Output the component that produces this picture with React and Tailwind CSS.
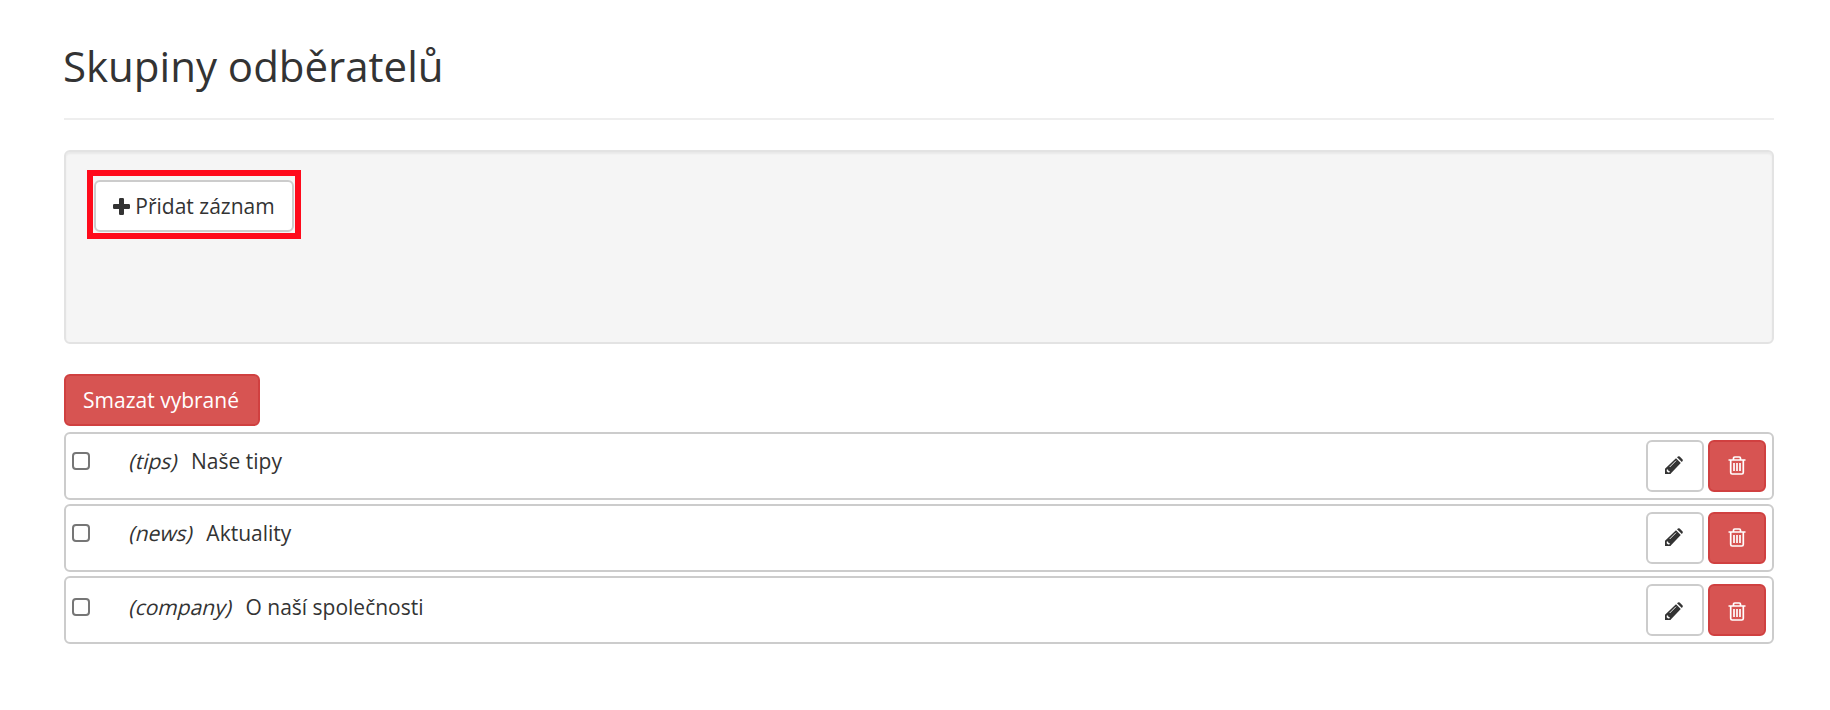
const groups = [
    { code: "tips", name: "Naše tipy" },
    { code: "news", name: "Aktuality" },
    { code: "company", name: "O naší společnosti" },
];

function PlusIcon() {
    return (
        <svg width="17" height="17" viewBox="0 0 17 17" fill="currentColor" className="-mt-0.5">
            <path d="M7.200 0h2.600a1.200 1.200 0 0 1 1.200 1.200V6h4.800A1.200 1.200 0 0 1 17 7.200v2.600a1.200 1.200 0 0 1-1.200 1.200H11v4.800A1.200 1.200 0 0 1 9.800 17H7.200A1.200 1.200 0 0 1 6 15.800V11H1.200A1.200 1.200 0 0 1 0 9.800V7.200A1.200 1.200 0 0 1 1.200 6H6V1.200A1.200 1.200 0 0 1 7.200 0z" />
        </svg>
    );
}

function PencilIcon() {
    return (
        <svg width="18" height="18" viewBox="0 0 18 18" className="-ml-0.5">
            <path fill="#333" d="M12 1.200l1-.8q.8-.6 1.700.2l2.700 2.700q.8.800.2 1.700l-.8 1zM11 2.200l4.800 4.800L6 17.200 5.500 18H0v-5.200z" />
            <path stroke="#fff" strokeWidth=".9" d="M4.700 11l6.300-6.300" />
            <path fill="#fff" d="M1.800 13.400l1.200.1.400 1.300 1.300.4.100 1.100-1.700.3-1.400-1.400z" />
        </svg>
    );
}

function TrashIcon() {
    return (
        <svg width="18" height="19" viewBox="0 0 18 19" fill="none" stroke="currentColor" strokeWidth="1.700">
            <path d="M.5 4h17M5.500 4V2.200q0-1.200 1.200-1.200h4.600q1.200 0 1.200 1.200V4M2.700 4v12.500q0 1.500 1.500 1.500h9.600q1.500 0 1.500-1.500V4M6 7v8M9 7v8M12 7v8" />
        </svg>
    );
}

function GroupRow({ group, last }) {
    return (
        <li className="flex h-[68px] items-start justify-between rounded-md border-2 border-[#ccc] p-1.5">
            <label className={`flex ${last ? "pt-[14px]" : "pt-3"}`}>
                <input type="checkbox" className="size-[18px] appearance-none rounded border-2 border-[#767676] bg-white" />
                <span className="ml-10 flex h-5 items-center gap-[13px] whitespace-pre">
                    <span className="-skew-x-[14deg]">({group.code})</span>
                    <span>{group.name}</span>
                </span>
            </label>
            <div className="flex gap-1">
                <button className={`flex h-[52px] w-[58px] justify-center rounded-md border-2 border-[#ccc] bg-white ${last ? "pt-4" : "pt-[14px]"}`}>
                    <PencilIcon />
                </button>
                <button className={`flex h-[52px] w-[58px] justify-center rounded-md border-2 border-[#d04040] bg-[#d75452] text-white ${last ? "pt-4" : "pt-[14px]"}`}>
                    <TrashIcon />
                </button>
            </div>
        </li>
    );
}

export default function App() {
    return (
        <div className="h-[710px] bg-white px-16 pt-[39px] font-['Open_Sans','Noto_Sans',sans-serif] text-[21px] text-[#333]">
            <header className="h-[81px] w-[1710px] border-b-2 border-[#eee]">
                <h1 className="-ml-px text-[42px] leading-[54px]">Skupiny odběratelů</h1>
            </header>

            <section className="mt-[30px] h-[194px] w-[1710px] rounded-md border-2 border-[#e3e3e3] bg-[#f5f5f5] px-[21px] py-[18px] shadow-[inset_0_2px_2px_rgba(0,0,0,0.05)]">
                <div className="h-[69px] w-[214px] border-6 border-[#ff0a1b] pt-1 pl-px">
                    <button className="flex h-[52px] w-[200px] items-center justify-center gap-[5px] rounded-md border-2 border-[#ccc] bg-white pt-0.5">
                        <PlusIcon />
                        Přidat záznam
                    </button>
                </div>
            </section>

            <button className="mt-[30px] flex h-[52px] w-[196px] items-center justify-center rounded-md border-2 border-[#d04040] bg-[#d75452] pt-0.5 pr-0.5 text-white">
                Smazat vybrané
            </button>

            <ul className="mt-1.5 flex w-[1710px] flex-col gap-1">
                {groups.map((group, i) => (
                    <GroupRow key={group.code} group={group} last={i === groups.length - 1} />
                ))}
            </ul>
        </div>
    );
}
